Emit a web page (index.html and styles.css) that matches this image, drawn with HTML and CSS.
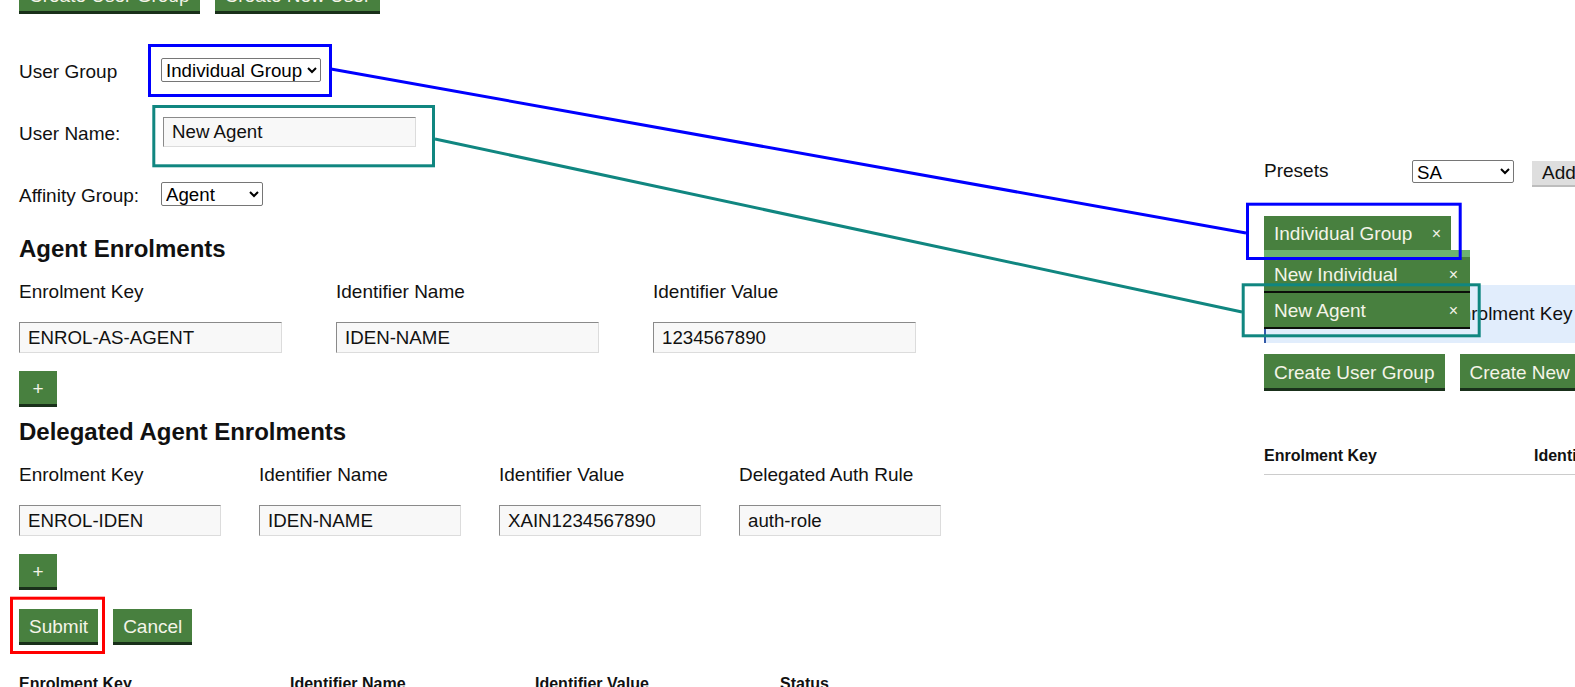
FILE: index.html
```html
<!DOCTYPE html>
<html lang="en">
<head>
<meta charset="utf-8">
<title>Create User</title>
<link rel="stylesheet" href="styles.css">
</head>
<body>
<div class="page">
  <div class="main">
    <div class="top-actions">
      <button class="btn">Create User Group</button>
      <button class="btn">Create New User</button>
    </div>

    <div class="field-row row-group">
      <label class="field-label">User Group</label>
      <select class="sel sel-group"><option>Individual Group</option></select>
    </div>
    <div class="field-row row-name">
      <label class="field-label">User Name:</label>
      <input class="txt txt-name" type="text" value="New Agent">
    </div>
    <div class="field-row row-affinity">
      <label class="field-label">Affinity Group:</label>
      <select class="sel sel-affinity"><option>Agent</option></select>
    </div>

    <h2 class="section-title title-agent">Agent Enrolments</h2>
    <div class="enrol-grid agent-grid">
      <div class="col"><div class="col-label">Enrolment Key</div><input class="txt" type="text" value="ENROL-AS-AGENT"></div>
      <div class="col"><div class="col-label">Identifier Name</div><input class="txt" type="text" value="IDEN-NAME"></div>
      <div class="col"><div class="col-label">Identifier Value</div><input class="txt" type="text" value="1234567890"></div>
    </div>
    <button class="btn btn-plus">+</button>

    <h2 class="section-title title-delegated">Delegated Agent Enrolments</h2>
    <div class="enrol-grid delegated-grid">
      <div class="col"><div class="col-label">Enrolment Key</div><input class="txt" type="text" value="ENROL-IDEN"></div>
      <div class="col"><div class="col-label">Identifier Name</div><input class="txt" type="text" value="IDEN-NAME"></div>
      <div class="col"><div class="col-label">Identifier Value</div><input class="txt" type="text" value="XAIN1234567890"></div>
      <div class="col"><div class="col-label">Delegated Auth Rule</div><input class="txt" type="text" value="auth-role"></div>
    </div>
    <button class="btn btn-plus">+</button>

    <div class="form-actions">
      <button class="btn">Submit</button>
      <button class="btn">Cancel</button>
    </div>

    <div class="table-head bottom-head">
      <div>Enrolment Key</div>
      <div>Identifier Name</div>
      <div>Identifier Value</div>
      <div>Status</div>
    </div>
  </div>

  <div class="side">
    <div class="preset-row">
      <label class="preset-label">Presets</label>
      <select class="sel sel-preset"><option>SA</option></select>
      <button class="btn-grey">Add</button>
    </div>

    <div class="highlight-wrap">
      <div class="chip-list">
        <div class="chip chip-first"><span>Individual Group</span><span class="chip-x">×</span></div>
        <div class="chip-strip"></div>
        <div class="chip chip-line"><span>New Individual</span><span class="chip-x">×</span></div>
        <div class="chip chip-line"><span>New Agent</span><span class="chip-x">×</span></div>
      </div>
      <div class="highlight-row">
        <div class="highlight-spacer"></div>
        <div class="highlight-text">Enrolment Key</div>
      </div>
    </div>

    <div class="side-actions">
      <button class="btn">Create User Group</button>
      <button class="btn">Create New User</button>
    </div>

    <div class="table-head side-head">
      <div>Enrolment Key</div>
      <div>Identifier Name</div>
    </div>
  </div>
</div>

<svg class="annotations" width="1575" height="687" viewBox="0 0 1575 687" aria-hidden="true">
  <rect x="149.5" y="45.5" width="181" height="50" fill="none" stroke="#0000ff" stroke-width="3"/>
  <rect x="1247.5" y="204.2" width="212.7" height="54.3" fill="none" stroke="#0000ff" stroke-width="3"/>
  <line x1="331" y1="69" x2="1246" y2="233" stroke="#0000ff" stroke-width="3"/>
  <rect x="153.8" y="106.5" width="279.7" height="59.3" fill="none" stroke="#108680" stroke-width="3"/>
  <rect x="1243.2" y="284.8" width="236" height="51" fill="none" stroke="#108680" stroke-width="3"/>
  <line x1="435" y1="139" x2="1242" y2="312" stroke="#108680" stroke-width="3"/>
  <rect x="11.5" y="598.2" width="92" height="54.3" fill="none" stroke="#ff0000" stroke-width="3"/>
</svg>
</body>
</html>
```

FILE: styles.css
```css
html, body {
  margin: 0;
  padding: 0;
  width: 1575px;
  height: 687px;
  overflow: hidden;
  background: #ffffff;
}

body {
  position: relative;
  font-family: "Liberation Sans", Arial, sans-serif;
  font-size: 19px;
  color: #111111;
}

.page {
  display: flex;
  align-items: flex-start;
  width: 1575px;
}

.main {
  box-sizing: border-box;
  width: 1264px;
  flex: 0 0 1264px;
  padding-left: 19px;
}

.side {
  flex: 1 1 auto;
  min-width: 0;
  overflow: hidden;
  padding-top: 160px;
}

/* Buttons */
.btn {
  box-sizing: border-box;
  height: 36px;
  padding: 2px 10px 0;
  margin: 0;
  border: 0;
  border-bottom: 3px solid #19301a;
  border-radius: 0;
  background: #48803f;
  color: #f4f4e8;
  font-family: "Liberation Sans", Arial, sans-serif;
  font-size: 19px;
  line-height: 31px;
  white-space: nowrap;
  flex: 0 0 auto;
}

.btn-plus {
  display: block;
  width: 38px;
  padding-left: 0;
  padding-right: 0;
  text-align: center;
  margin-top: 18px;
}

.top-actions {
  display: flex;
  gap: 15px;
  margin-top: -22px;
}

.form-actions {
  display: flex;
  gap: 15px;
  margin-top: 19px;
}

/* Fields */
.field-row {
  display: flex;
  align-items: center;
}

.field-label {
  width: 142px;
  flex: 0 0 142px;
  padding-top: 3px;
  line-height: 20px;
}

.row-group { margin-top: 44px; }
.row-name { margin-top: 35px; }
.row-affinity { margin-top: 35px; }

.sel {
  box-sizing: border-box;
  flex: 0 0 auto;
  height: 24px;
  margin: 0;
  font-family: "Liberation Sans", Arial, sans-serif;
  font-size: 18.7px;
  color: #000000;
  background-color: #ffffff;
  border: 1px solid #767676;
  border-radius: 2px;
}

.sel-group { width: 160px; }
.sel-affinity { width: 102px; }
.sel-preset { width: 102px; height: 23px; }

.txt {
  box-sizing: border-box;
  height: 31px;
  margin: 0;
  padding: 0 8px;
  font-family: "Liberation Sans", Arial, sans-serif;
  font-size: 18.7px;
  color: #111111;
  background: #f8f8f8;
  border: 1px solid #dcdcdc;
  border-top-color: #8a8a8a;
  border-left-color: #8a8a8a;
  border-radius: 0;
  outline: none;
}

.txt-name {
  flex: 0 0 auto;
  width: 253px;
  height: 30px;
  margin-left: 2px;
}

/* Sections */
.section-title {
  margin: 0;
  font-size: 24px;
  line-height: 28px;
  font-weight: bold;
  color: #111111;
}

.title-agent { margin-top: 29px; }
.title-delegated { margin-top: 11px; }

.enrol-grid {
  display: grid;
  margin-top: 18px;
}

.agent-grid {
  grid-template-columns: repeat(3, 263px);
  column-gap: 54px;
}

.delegated-grid {
  grid-template-columns: repeat(4, 202px);
  column-gap: 38px;
}

.col {
  display: flex;
  flex-direction: column;
}

.col-label {
  line-height: 22px;
  margin-bottom: 19px;
  white-space: nowrap;
}

.col .txt { width: 100%; }

/* Table heads */
.table-head {
  display: grid;
  font-size: 16px;
  font-weight: bold;
  line-height: 20px;
  color: #111111;
  white-space: nowrap;
}

.bottom-head {
  grid-template-columns: 271px 245px 245px 245px;
  margin-top: 29px;
}

.side-head {
  grid-template-columns: 270px 270px;
  width: 600px;
  margin-top: 55px;
  padding-bottom: 8px;
  border-bottom: 1px solid #cccccc;
}

/* Side panel */
.preset-row {
  display: flex;
  align-items: flex-start;
  white-space: nowrap;
}

.preset-label {
  width: 148px;
  flex: 0 0 148px;
  line-height: 22px;
}

.btn-grey {
  box-sizing: border-box;
  flex: 0 0 auto;
  height: 26px;
  margin: 1px 0 0 18px;
  padding: 0 10px;
  border: 0;
  border-bottom: 2px solid #bdbdbd;
  border-radius: 0;
  background: #dedede;
  color: #111111;
  font-family: "Liberation Sans", Arial, sans-serif;
  font-size: 19px;
  line-height: 24px;
}

.highlight-wrap {
  position: relative;
  margin-top: 98px;
}

.highlight-row {
  display: flex;
  align-items: center;
  box-sizing: border-box;
  height: 58px;
  width: 600px;
  background: #e1edfc;
  border-left: 2px solid #335aa8;
  white-space: nowrap;
}

.highlight-spacer {
  width: 182px;
  flex: 0 0 182px;
}

.highlight-text {
  line-height: 22px;
}

.chip-list {
  position: absolute;
  left: 0;
  top: -69px;
  width: 206px;
  z-index: 2;
}

.chip {
  box-sizing: border-box;
  display: flex;
  justify-content: space-between;
  align-items: center;
  padding: 2px 12px 0 10px;
  background: #48803f;
  color: #f4f4e8;
  font-size: 19px;
  line-height: 22px;
  white-space: nowrap;
}

.chip-first {
  width: 187px;
  height: 34px;
  padding-right: 10px;
}

.chip-strip {
  height: 7px;
  background: #6cb270;
}

.chip-line {
  height: 36px;
  border-bottom: 2px solid #0b0f0a;
}

.chip-x {
  font-size: 16px;
}

.side-actions {
  display: flex;
  gap: 15px;
  margin-top: 11px;
  height: 37px;
  white-space: nowrap;
}

.side-actions .btn { height: 37px; }

/* Annotation overlay */
.annotations {
  position: absolute;
  left: 0;
  top: 0;
  pointer-events: none;
  z-index: 10;
}
```
